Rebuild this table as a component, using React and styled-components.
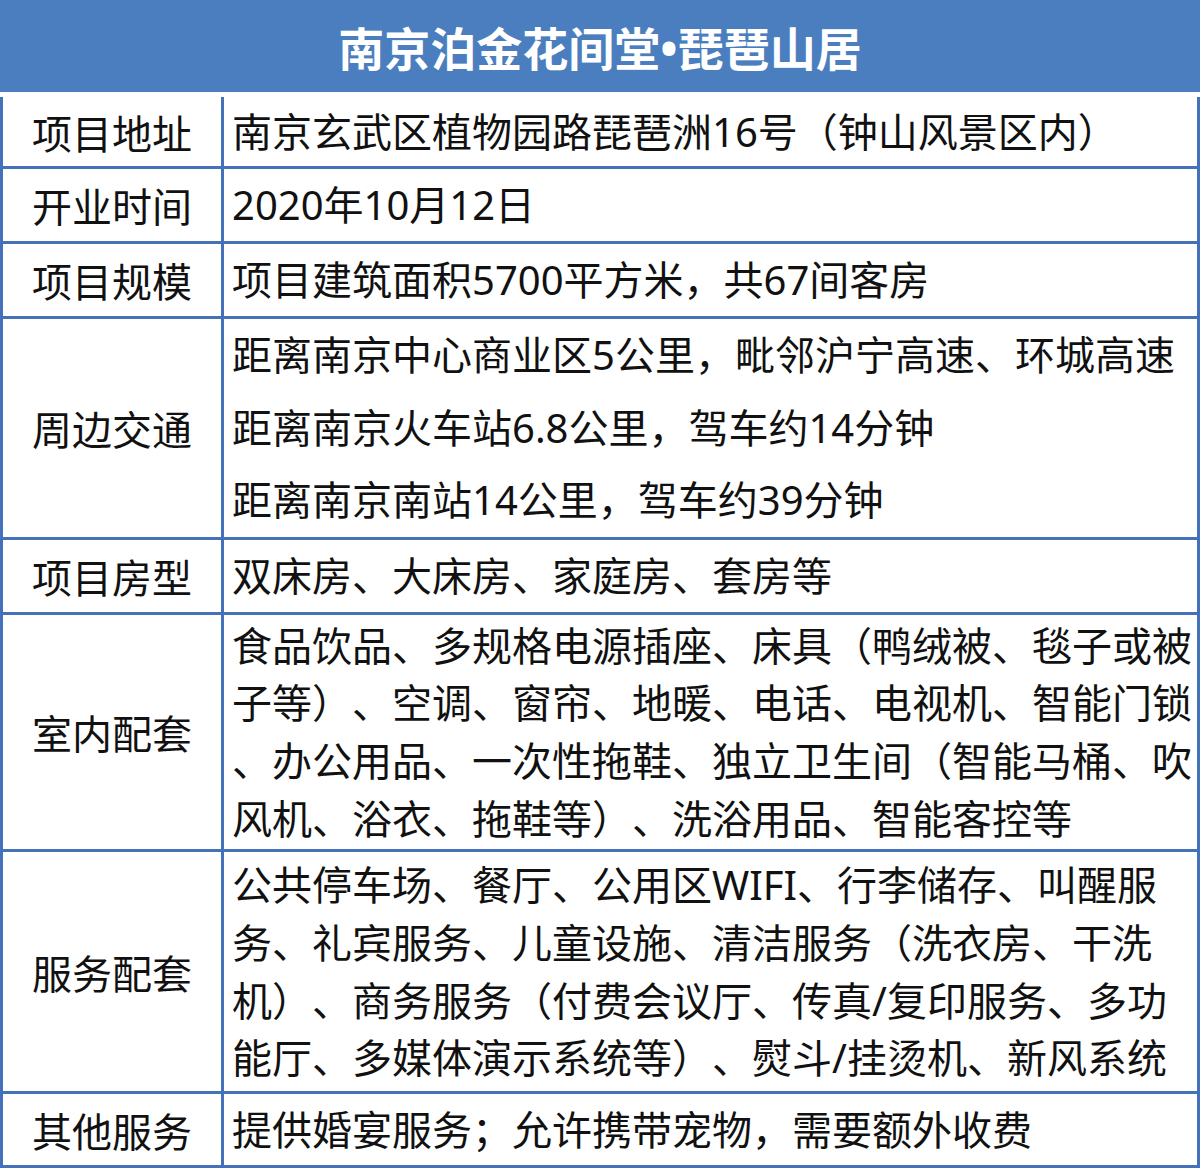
import styled, { createGlobalStyle } from 'styled-components';

const GlobalStyle = createGlobalStyle`
  html, body {
    margin: 0;
    padding: 0;
    background: #ffffff;
  }
  body {
    font-family: "Noto Sans", "Noto Sans CJK SC", sans-serif;
    color: #111111;
    text-spacing-trim: space-all;
  }
`

const rows = [
  { label: '项目地址', height: 69, lines: ['南京玄武区植物园路琵琶洲16号（钟山风景区内）'] },
  { label: '开业时间', height: 72, lines: ['2020年10月12日'] },
  { label: '项目规模', height: 72, lines: ['项目建筑面积5700平方米，共67间客房'] },
  {
    label: '周边交通',
    height: 218,
    lineHeight: 72.7,
    lines: [
      '距离南京中心商业区5公里，毗邻沪宁高速、环城高速',
      '距离南京火车站6.8公里，驾车约14分钟',
      '距离南京南站14公里，驾车约39分钟',
    ],
  },
  { label: '项目房型', height: 72, lines: ['双床房、大床房、家庭房、套房等'] },
  {
    label: '室内配套',
    height: 234,
    lineHeight: 57.7,
    lines: [
      '食品饮品、多规格电源插座、床具（鸭绒被、毯子或被',
      '子等）、空调、窗帘、地暖、电话、电视机、智能门锁',
      '、办公用品、一次性拖鞋、独立卫生间（智能马桶、吹',
      '风机、浴衣、拖鞋等）、洗浴用品、智能客控等',
    ],
  },
  {
    label: '服务配套',
    height: 239,
    lineHeight: 57.7,
    lines: [
      '公共停车场、餐厅、公用区WIFI、行李储存、叫醒服',
      '务、礼宾服务、儿童设施、清洁服务（洗衣房、干洗',
      '机）、商务服务（付费会议厅、传真/复印服务、多功',
      '能厅、多媒体演示系统等）、熨斗/挂烫机、新风系统',
    ],
  },
  { label: '其他服务', height: 71, lines: ['提供婚宴服务；允许携带宠物，需要额外收费'] },
]

const App = () => {
  return (
    <>
      <GlobalStyle />
      <Page>
        <Banner>南京泊金花间堂•琵琶山居</Banner>
        <Sheet>
          {rows.map((row) => (
            <Row key={row.label} $height={row.height}>
              <Label>{row.label}</Label>
              <Content>
                {row.lines.map((line) => (
                  <Line key={line} $lineHeight={row.lineHeight}>
                    {line}
                  </Line>
                ))}
              </Content>
            </Row>
          ))}
        </Sheet>
      </Page>
    </>
  )
}

const Page = styled.div`
  width: 1200px;
  height: 1168px;
  overflow: hidden;
`

const Banner = styled.div`
  height: 92px;
  box-sizing: border-box;
  padding-top: 4px;
  background: #4b7ebe;
  color: #ffffff;
  font-family: "Noto Sans", "Noto Sans CJK SC", sans-serif;
  font-size: 46px;
  font-weight: 700;
  line-height: 88px;
  text-align: center;
`

const Sheet = styled.div`
  margin-top: 5px;
  border-left: 3px solid #4472b9;
  border-right: 3px solid #4472b9;
`

const Row = styled.div`
  display: grid;
  grid-template-columns: 221px 1fr;
  height: ${(p) => p.$height}px;
  border-bottom: 3px solid #4472b9;
`

const Label = styled.div`
  display: flex;
  align-items: center;
  justify-content: center;
  border-right: 3px solid #4472b9;
  font-size: 40px;
  white-space: nowrap;
`

const Content = styled.div`
  display: flex;
  flex-direction: column;
  justify-content: center;
  padding-left: 8px;
  font-size: 40px;
`

const Line = styled.div`
  white-space: nowrap;
  line-height: ${(p) => (p.$lineHeight ? `${p.$lineHeight}px` : '1.2')};
`

export default App
